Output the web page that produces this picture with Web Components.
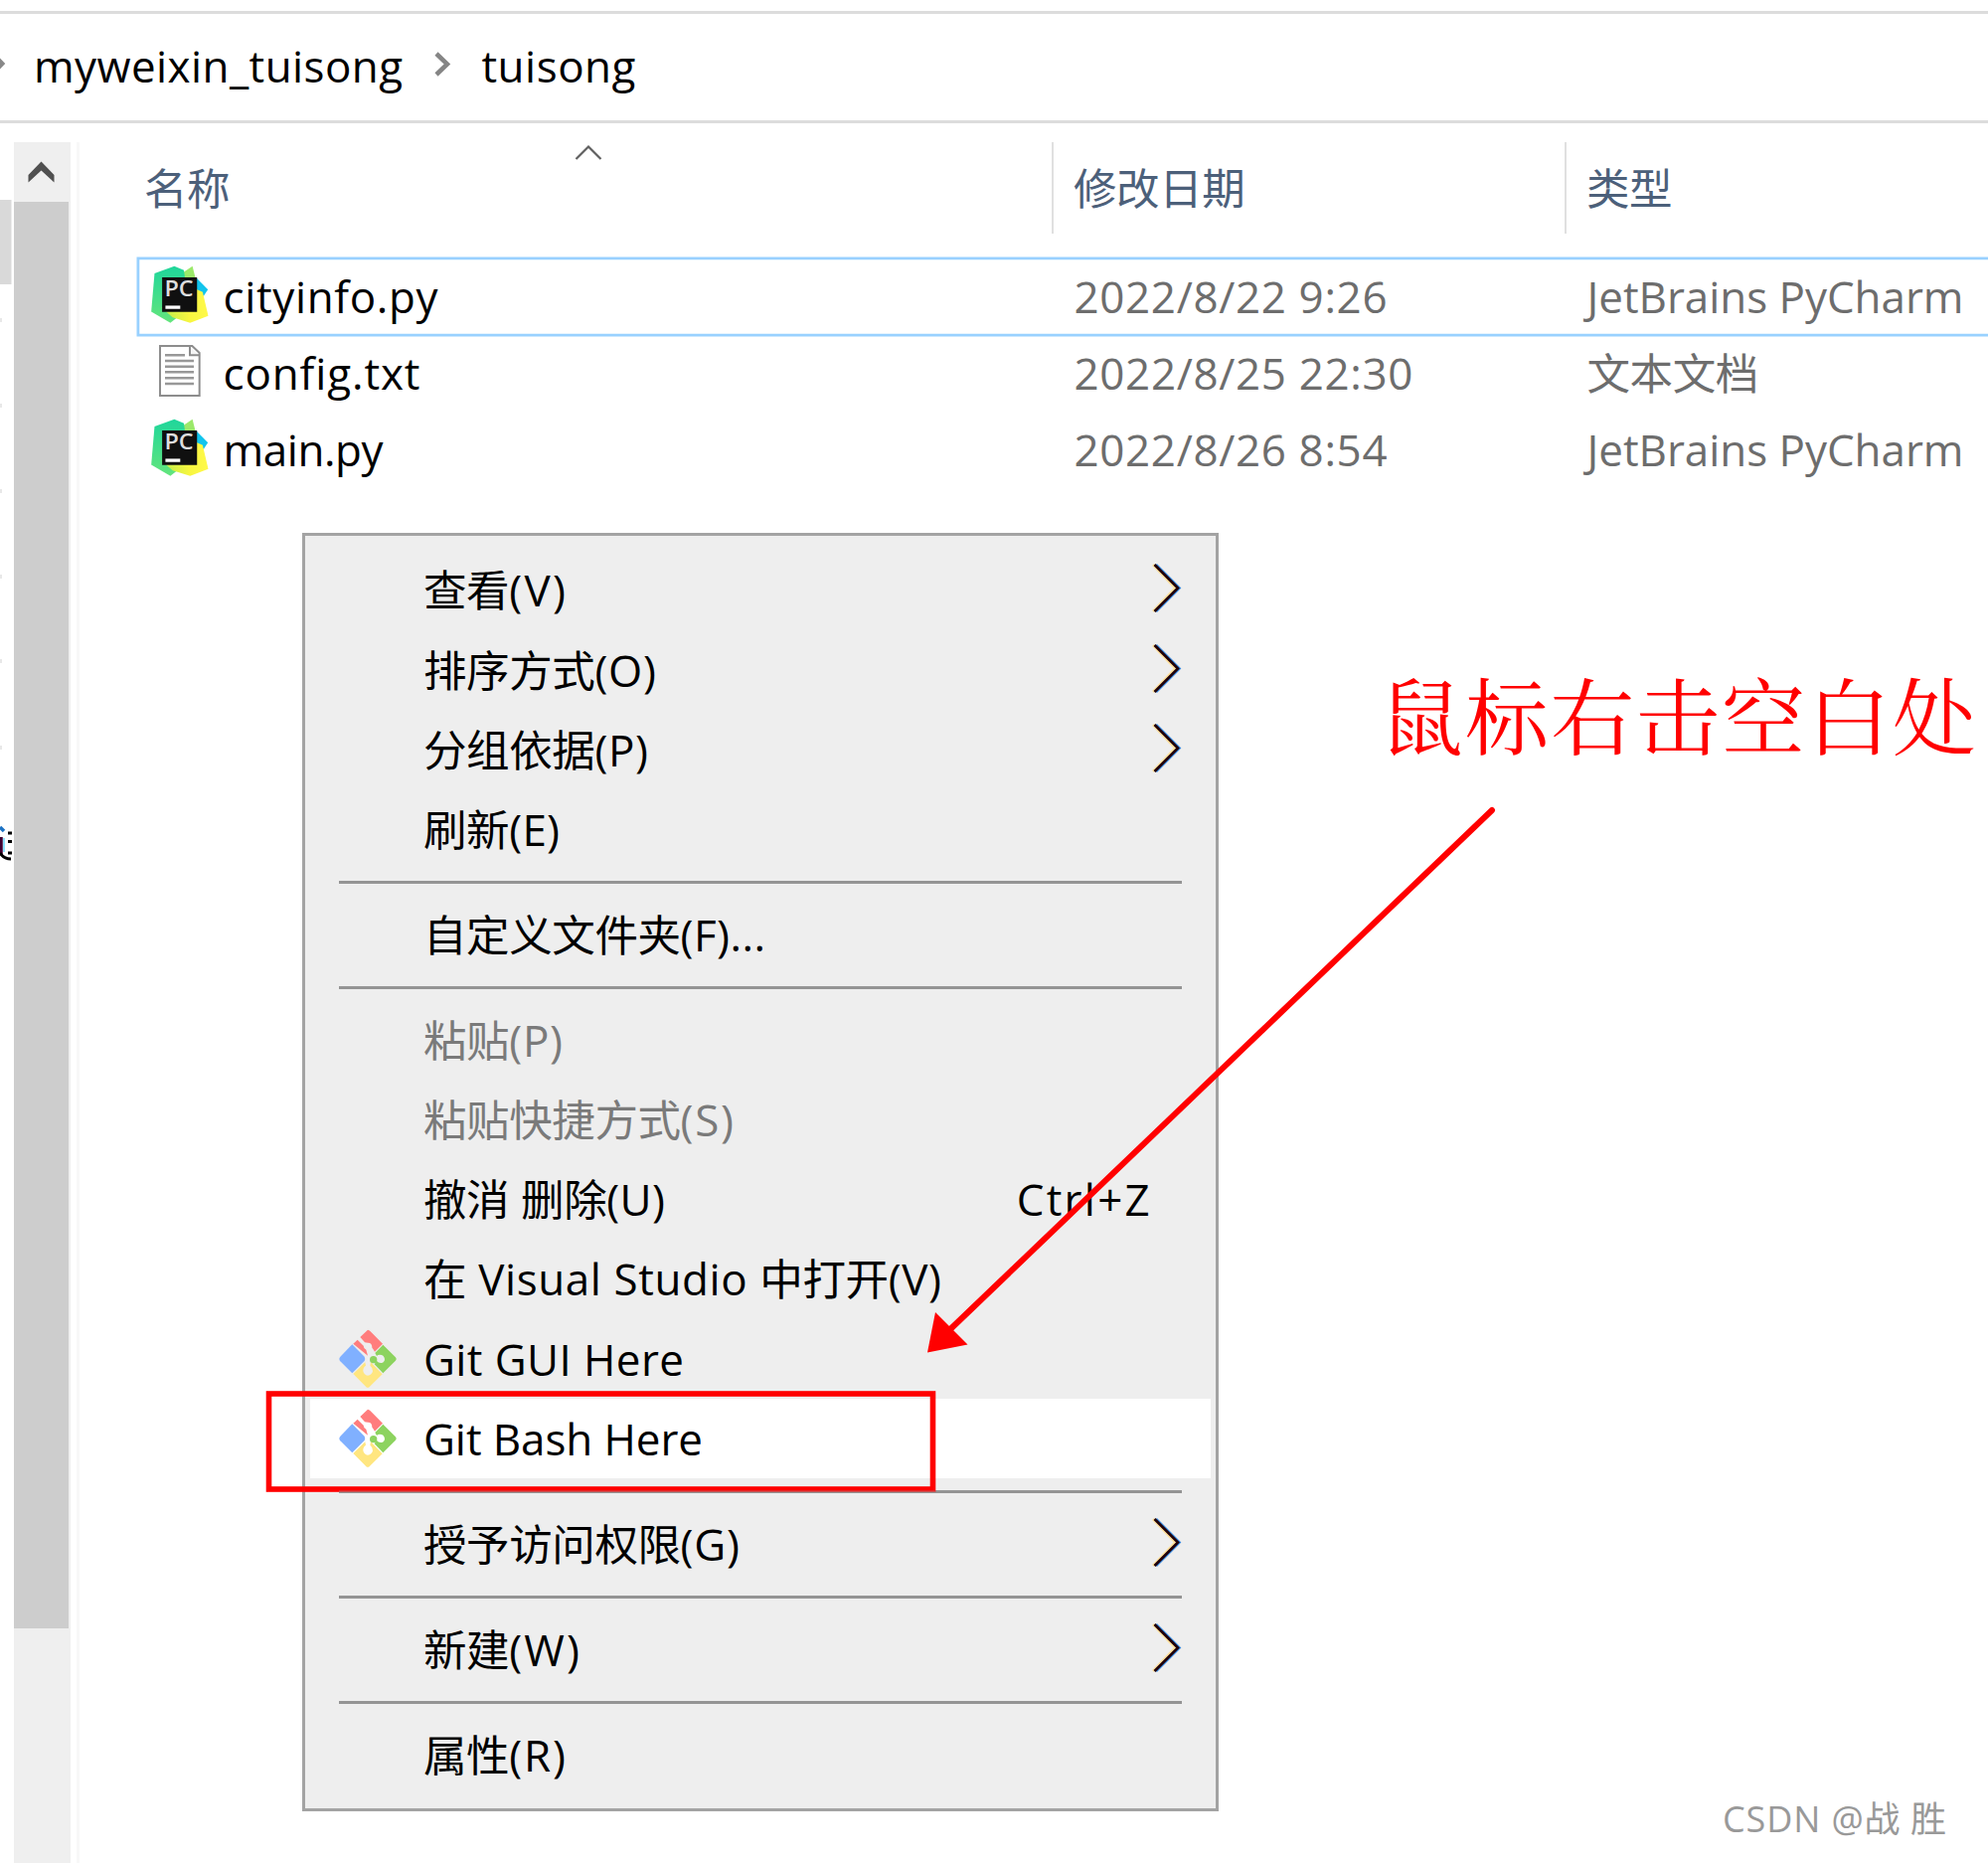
<!DOCTYPE html>
<html lang="zh-CN">
<head>
<meta charset="utf-8">
<title>tuisong</title>
<style>
html,body{margin:0;padding:0;background:#fff}
body{width:2000px;height:1874px;overflow:hidden;font-family:"Open Sans","Noto Sans CJK SC",sans-serif;font-size:43.500px;color:#000}
</style>
</head>
<body>
<file-explorer></file-explorer>
<script>
const define=(name,html,setup)=>customElements.define(name,class extends HTMLElement{
  connectedCallback(){
    if(this.shadowRoot)return;
    const root=this.attachShadow({mode:'open'});
    root.innerHTML=typeof html==='function'?html(this):html;
    if(setup)setup(this,root);
  }
});

/* One line of text; w sets its width by spacing the Latin runs. */
define('text-line',el=>{
  const t=el.getAttribute('text').replace(/[^\u2e80-\u9fff]+/g,m=>`<span>${m}</span>`);
  return `<style>:host{display:block;white-space:pre;line-height:var(--lh,60px);flex:none;letter-spacing:var(--ls,-.4px)}
  b{font-weight:inherit;display:inline-block}span{font-size:var(--latin,1.01em);line-height:0;letter-spacing:0}</style><b>${t}</b>`;
},(el,root)=>{
  const w=+el.getAttribute('w');if(!w)return;
  const spans=[...root.querySelectorAll('span')];
  const n=spans.reduce((a,s)=>a+s.textContent.length,0);
  const ls=(w-root.querySelector('b').getBoundingClientRect().width)/Math.max(1,n-1);
  spans.forEach(s=>s.style.letterSpacing=ls+'px');
});

define('pycharm-icon',`<style>:host{display:block;width:58px;height:58px}svg{display:block}</style>
<svg width="58" height="58" viewBox="65 77 174 175">
<defs><linearGradient id="g" x1="0" y1="0" x2="0" y2="1"><stop offset="0" stop-color="#1fd69b"/><stop offset="1" stop-color="#63e57c"/></linearGradient>
<linearGradient id="y" x1="0" y1="0" x2="1" y2="0"><stop offset="0" stop-color="#b9ec4c"/><stop offset=".6" stop-color="#f8f63f"/><stop offset="1" stop-color="#fff94a"/></linearGradient></defs>
<path d="M190 79L201 122L150 120L160 100Z" fill="#9be96a"/>
<path d="M202 115L237 150L224 170L200 165Z" fill="#12c4ec"/>
<path d="M75 101L135 79L164 91L172 150L150 230L123 251L65 217Z" fill="url(#g)"/>
<path d="M96 205L204 150L221 158L238 230L183 251L130 235Z" fill="url(#y)"/>
<path d="M98 113H204V218H98Z" fill="#101010"/>
<text x="105" y="171" font-family="Open Sans" font-weight="600" font-size="64" fill="#dedede" textLength="88" lengthAdjust="spacingAndGlyphs" letter-spacing="0">PC</text>
<path d="M108 199H153V209H108Z" fill="#fff"/></svg>`);

define('text-icon',`<style>:host{display:block;width:42px;height:52px}svg{display:block}</style>
<svg width="42" height="52" viewBox="90 319 126 156"><path d="M93 322H190L212 343V472H93Z" fill="#fff" stroke="#8d8d8d" stroke-width="6"/>
<path d="M183 324V350H210" fill="#f4f4f4" stroke="#8d8d8d" stroke-width="6"/>
<path d="M108 350H168M108 367H195M108 384H195M108 401H195M108 419H195M108 436H195" stroke="#989898" stroke-width="7.500"/></svg>`);

define('git-icon',`<style>:host{display:block;width:58px;height:60px}svg{display:block}</style>
<svg width="58" height="60" viewBox="272 111 174 178">
<path d="M359 112Q363 112 367 117L404 154L380 178Q376 170 372 166Q372 151 360 151Q353 151 350 150L336 134Z" fill="#ff7d7d"/>
<path d="M328 142L346 160Q346 168 354 172L359 190L315 154Z" fill="#ff7d7d"/>
<path d="M312 156L349 193Q352 200 349 206L312 243L276 207Q270 200 276 193Z" fill="#80b0ff"/>
<path d="M405 157L442 194Q448 200 442 206L405 243L379 216Q385 209 385 205Q393 214 401 212Q410 209 410 200Q408 187 395 187Q389 187 386 191L381 182Z" fill="#8dd35f"/>
<circle cx="376" cy="202" r="11" fill="#8dd35f"/>
<path d="M315 245L351 210L353 220Q344 226 345 237Q348 249 359 250Q371 249 374 237Q374 226 366 220L368 210L403 246L365 283Q359 290 353 283Z" fill="#ffe680"/></svg>`);

define('path-bar',`<style>:host{display:flex;box-sizing:border-box;height:112.500px;margin-top:11px;border-top:3px solid #dcdcdc;border-bottom:3px solid #dcdcdc;align-items:flex-start}
text-line{margin-top:22.500px}svg{flex:none;display:block}</style>
<svg width="34" height="106" viewBox="0 0 34 106"><path d="M-8 39L2.500 50L-8 61" fill="none" stroke="#888" stroke-width="4"/></svg>
<text-line text="myweixin_tuisong" w="371"></text-line>
<svg width="79" height="106" viewBox="405 0 79 106"><path d="M439 40L450 50.500L439 61" fill="none" stroke="#858585" stroke-width="4.500"/></svg>
<text-line text="tuisong" w="155"></text-line>`);

define('nav-pane',`<style>:host{display:flex;width:80px;height:1731px;flex:none}
.tree{width:14px;flex:none}svg{display:block}.bar{width:57px;background:#efefef}
.thumb{width:55px;height:1435px;background:#cdcdcd}.edge{width:3px;margin-left:6px;background:#f8f8f8}</style>
<div class="tree"><svg width="14" height="760" viewBox="0 143 14 760">
<path d="M0 201H11.500V286H0Z" fill="#d9d9d9"/>
<path d="M0 322H2M0 408H2M0 494H2M0 580H2M0 665H2M0 752H2" stroke="#e8e8e8" stroke-width="4"/>
<path d="M0 832L4 836" stroke="#1b72c4" stroke-width="3.500"/>
<path d="M1 842V860" stroke="#400030" stroke-width="3.500"/><path d="M4 843V857" stroke="#8ee4ff" stroke-width="2"/>
<path d="M0 858Q4 864 11 864M8 838H12M8 846.500H12M8 858H12" fill="none" stroke="#000" stroke-width="3"/></svg></div>
<div class="bar"><svg width="57" height="60" viewBox="14 143 57 60"><path d="M28.500 176L41.500 162.500L54.500 176V183.500L41.500 171.500L28.500 183.500Z" fill="#505050"/></svg><div class="thumb"></div></div><div class="edge"></div>`);

define('file-header',`<style>:host{display:flex;height:92px;color:#4c607a}
.n{width:922px;padding-left:56px;display:flex;--lh:92px;flex:none}
.c{display:flex;box-sizing:border-box;border-left:2px solid #e0e0e0;padding-left:20px;--lh:92px;width:516px;flex:none}
.c:last-child{width:424px}svg{display:block;margin-left:346.500px}text-line{margin-top:1px}</style>
<div class="n"><text-line style="margin-left:9px" text="名称"></text-line><svg width="28" height="20" viewBox="578 143 28 20"><path d="M579.500 160L592 147.500L604.500 160" fill="none" stroke="#606060" stroke-width="2.200"/></svg></div>
<div class="c"><text-line text="修改日期"></text-line></div><div class="c"><text-line text="类型"></text-line></div>`);

define('file-row',el=>`<style>:host{display:flex;box-sizing:border-box;height:77.300px;padding-left:13px;--lh:77.300px}
:host([selected]){box-shadow:0 0 0 1.500px #99d1ff,inset 0 0 0 1.300px #99d1ff}
.i{width:73px;display:flex;align-items:flex-start;flex:none}text-icon{margin:10px 0 0 8px}pycharm-icon{margin:7px 0 0}
.n{width:856px;flex:none}.d{width:516px;color:#6d6d6d;flex:none}.t{color:#6d6d6d}</style>
<div class="i"><${el.getAttribute('icon')}></${el.getAttribute('icon')}></div>
<div class="n"><text-line text="${el.getAttribute('name')}" w="${el.getAttribute('nw')}"></text-line></div>
<div class="d"><text-line text="${el.getAttribute('date')}" w="${el.getAttribute('dw')}"></text-line></div>
<div class="t"><text-line text="${el.getAttribute('type')}" w="${el.getAttribute('tw')||''}"></text-line></div>`);

define('file-list',`<style>:host{display:block;width:1930px;flex:none}.rows{margin:24.500px 0 0 58.500px}</style>
<file-header></file-header><div class="rows">
<file-row selected icon="pycharm-icon" name="cityinfo.py" nw="216" date="2022/8/22 9:26" dw="315" type="JetBrains PyCharm" tw="379"></file-row>
<file-row icon="text-icon" name="config.txt" nw="198" date="2022/8/25 22:30" dw="341" type="文本文档"></file-row>
<file-row icon="pycharm-icon" name="main.py" nw="161" date="2022/8/26 8:54" dw="315" type="JetBrains PyCharm" tw="379"></file-row></div>`);

define('menu-item',el=>`<style>:host{display:flex;height:80.200px;margin:0 5px;--lh:82px}
:host([hot]){background:#fff}:host([disabled]){color:#7a7a7a}
.i{width:114px;padding-left:28.500px;box-sizing:border-box;flex:none;display:flex;align-items:center}.l{flex:1}
.k{margin-right:59px}.a{display:block;margin:11px 27px 0 0}</style>
<div class="i">${el.hasAttribute('git')?'<git-icon></git-icon>':''}</div>
<div class="l"><text-line text="${el.getAttribute('label')}" w="${el.getAttribute('w')}"></text-line></div>
${el.hasAttribute('key')?`<text-line class="k" text="${el.getAttribute('key')}" w="134"></text-line>`:''}
${el.hasAttribute('sub')?`<svg class="a" width="34" height="54" viewBox="0 0 34 54"><g fill="none" stroke-width="2.600"><path d="M3 4L25.500 27.500L3 51" stroke="#ffe09a"/><path d="M6 4L29.500 27.500L6 51" stroke="#3388e0"/><path d="M4.500 4L28 27.500L4.500 51" stroke="#200008"/></g></svg>`:''}`);

define('menu-rule',`<style>:host{display:block;height:25.800px;box-sizing:border-box;padding:11.700px 34px 0}i{display:block;height:3px;background:#949494}</style><i></i>`);

define('context-menu',`<style>:host{display:block;box-sizing:border-box;width:922px;height:1286px;background:#eee;border:3px solid #a3a3a3;padding-top:14.400px}</style>
<menu-item label="查看(V)" w="143" sub></menu-item>
<menu-item label="排序方式(O)" w="234" sub></menu-item>
<menu-item label="分组依据(P)" w="226" sub></menu-item>
<menu-item label="刷新(E)" w="137"></menu-item>
<menu-rule></menu-rule>
<menu-item label="自定义文件夹(F)..." w="344"></menu-item>
<menu-rule></menu-rule>
<menu-item label="粘贴(P)" w="140" disabled></menu-item>
<menu-item label="粘贴快捷方式(S)" w="312" disabled></menu-item>
<menu-item label="撤消 删除(U)" w="243" key="Ctrl+Z"></menu-item>
<menu-item label="在 Visual Studio 中打开(V)" w="521"></menu-item>
<menu-item label="Git GUI Here" w="262" git></menu-item>
<menu-item label="Git Bash Here" w="281" git hot></menu-item>
<menu-rule></menu-rule>
<menu-item label="授予访问权限(G)" w="318" sub></menu-item>
<menu-rule></menu-rule>
<menu-item label="新建(W)" w="157" sub></menu-item>
<menu-rule></menu-rule>
<menu-item label="属性(R)" w="143"></menu-item>`);

define('red-marks',`<style>:host{display:block;pointer-events:none}svg{display:block}</style>
<svg width="2000" height="1874" viewBox="0 0 2000 1874"><path d="M1501 815L953 1340" stroke="#f00" stroke-width="6" stroke-linecap="round"/>
<path d="M933 1360.500L941 1320L973.500 1352.500Z" fill="#f00"/>
<rect x="270.500" y="1402" width="668" height="96" fill="none" stroke="#f00" stroke-width="5.600"/>
<path d="M341 1500.300H941" stroke="#c85050" stroke-width="1.400"/></svg>`);

define('file-explorer',`<style>:host{display:block;position:relative;width:2000px;height:1874px;overflow:hidden;background:#fff}
.main{display:flex;padding-top:19.500px}context-menu{position:absolute;left:304px;top:536px}red-marks{position:absolute;left:0;top:0}
.note{position:absolute;left:1388px;top:657px;color:#f00;font-size:84px;font-weight:400;--ls:2px;font-family:"Noto Serif CJK SC","Noto Sans CJK SC",serif;--lh:120px}
.mark{position:absolute;left:1733px;top:1799px;color:#999;font-size:36px;--lh:62px;--latin:1em;--ls:0px}</style>
<path-bar></path-bar><div class="main"><nav-pane></nav-pane><file-list></file-list></div>
<context-menu></context-menu><red-marks></red-marks>
<text-line class="note" text="鼠标右击空白处"></text-line>
<text-line class="mark" text="CSDN @战 胜" w="224"></text-line>`);
</script>
</body>
</html>
